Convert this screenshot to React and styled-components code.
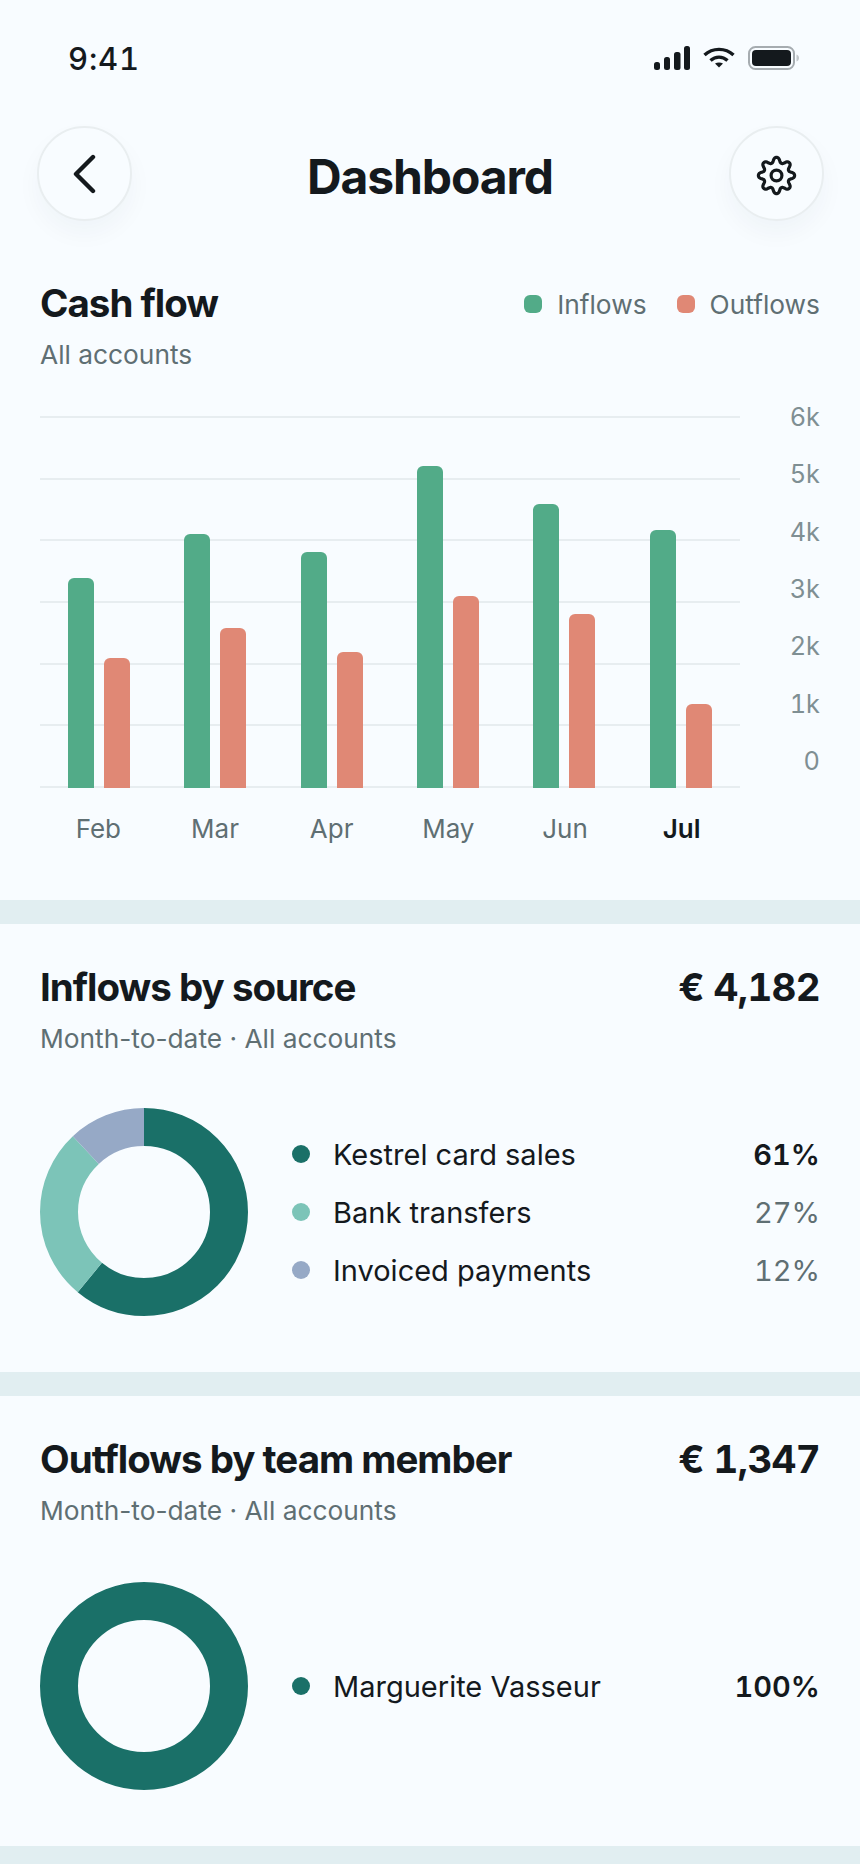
import styled, { createGlobalStyle } from 'styled-components';

const months = [
  { name: 'Feb', inflow: 210, outflow: 130 },
  { name: 'Mar', inflow: 254, outflow: 160 },
  { name: 'Apr', inflow: 236, outflow: 136 },
  { name: 'May', inflow: 322, outflow: 192 },
  { name: 'Jun', inflow: 284, outflow: 174 },
  { name: 'Jul', inflow: 258, outflow: 84, current: true },
];
const axisLabels = ['6k', '5k', '4k', '3k', '2k', '1k', '0'];
const gridLines = [0, 1, 2, 3, 4, 5, 6];

const sources = [
  { label: 'Kestrel card sales', pct: 61, color: '#1a7068', strong: true },
  { label: 'Bank transfers', pct: 27, color: '#7cc4b8' },
  { label: 'Invoiced payments', pct: 12, color: '#96a9c6' },
];
const members = [{ label: 'Marguerite Vasseur', pct: 100, color: '#1a7068', strong: true }];

const GlobalStyle = createGlobalStyle`
  html, body {
    margin: 0;
    padding: 0;
    background: #f8fcff;
    font-family: Inter, "Liberation Sans", sans-serif;
    color: #14191d;
  }
`;

const Page = styled.main`
  width: 860px;
  height: 1864px;
  overflow: hidden;
  background: #f8fcff;
`;

const StatusBar = styled.div`
  height: 116px;
  padding: 0 61px 0 68px;
  box-sizing: border-box;
  display: flex;
  align-items: center;
  justify-content: space-between;
`;

const Clock = styled.span`
  font-size: 31px;
  font-weight: 500;
  letter-spacing: 0.8px;
  font-variant-numeric: tabular-nums;
`;

const StatusIcons = styled.div`
  display: flex;
  align-items: center;
  gap: 13px;
`;

const Header = styled.header`
  height: 95px;
  margin-top: 10px;
  padding: 0 36.5px;
  display: flex;
  align-items: center;
  justify-content: space-between;
`;

const RoundButton = styled.button`
  width: 95px;
  height: 95px;
  padding: 0;
  border-radius: 50%;
  border: 2px solid #e9eef0;
  background: #f8fcff;
  color: #14191d;
  display: flex;
  align-items: center;
  justify-content: center;
  box-shadow: 0 12px 24px rgba(30, 60, 70, 0.04);
`;

const PageTitle = styled.h1`
  margin: 5px 0 0;
  font-size: 48px;
  font-weight: 700;
  letter-spacing: -1.1px;
`;

const Section = styled.section`
  padding: ${(p) => p.$top}px 40px ${(p) => p.$bottom}px;
`;

const HeadRow = styled.div`
  display: flex;
  align-items: center;
  justify-content: space-between;
`;

const SectionTitle = styled.h2`
  margin: 0;
  font-size: 38.5px;
  line-height: 46px;
  font-weight: 700;
  letter-spacing: -1px;
`;

const Sub = styled.p`
  margin: 14px 0 0;
  font-size: 26.3px;
  line-height: 30px;
  color: #5f6f73;
`;

const Amount = styled.span`
  font-size: 38.5px;
  font-weight: 700;
  letter-spacing: -0.7px;
  font-variant-numeric: tabular-nums;
`;

const Legend = styled.div`
  display: flex;
  gap: 30px;
  padding-top: 2px;
`;

const LegendItem = styled.span`
  display: flex;
  align-items: center;
  gap: 15px;
  font-size: 26.3px;
  color: #5f6f73;
`;

const Swatch = styled.i`
  width: 18px;
  height: 18px;
  border-radius: 6px;
  background: ${(p) => p.$color};
`;

const Chart = styled.div`
  margin-top: 44px;
  display: flex;
  justify-content: space-between;
  align-items: flex-start;
`;

const PlotColumn = styled.div`
  width: 700px;
  padding-top: 2px;
`;

const Plot = styled.div`
  position: relative;
  height: 372px;
  padding: 0 1px;
  display: grid;
  grid-template-columns: repeat(6, 1fr);
`;

const GridLayer = styled.div`
  position: absolute;
  inset: 0;
  display: flex;
  flex-direction: column;
  justify-content: space-between;
`;

const GridLine = styled.div`
  height: 2px;
  background: #e7edf0;
`;

const BarGroup = styled.div`
  position: relative;
  display: flex;
  align-items: flex-end;
  justify-content: center;
  gap: 10px;
`;

const Bar = styled.div`
  width: 26px;
  height: ${(p) => p.$height}px;
  border-radius: 6px 6px 0 0;
  background: ${(p) => p.$color};
`;

const Months = styled.div`
  display: grid;
  grid-template-columns: repeat(6, 1fr);
  margin-top: 26px;
`;

const Month = styled.span`
  text-align: center;
  font-size: 26px;
  line-height: 30px;
  color: ${(p) => (p.$current ? '#14191d' : '#5f6f73')};
  font-weight: ${(p) => (p.$current ? 600 : 400)};
`;

const Axis = styled.div`
  height: 372px;
  margin-top: -11px;
  display: flex;
  flex-direction: column;
  justify-content: space-between;
  align-items: flex-end;
`;

const AxisLabel = styled.span`
  font-size: 25.3px;
  line-height: 28px;
  color: #7f8f93;
  font-variant-numeric: tabular-nums;
`;

const Divider = styled.div`
  height: 24px;
  background: #e1eef1;
`;

const BreakdownRow = styled.div`
  margin-top: ${(p) => p.$top}px;
  display: flex;
  align-items: center;
`;

const BreakdownList = styled.ul`
  list-style: none;
  margin: 0 0 0 44px;
  padding: 0;
  flex: 1;
  display: flex;
  flex-direction: column;
  gap: 24px;
`;

const BreakdownItem = styled.li`
  display: flex;
  align-items: center;
  height: 34px;
`;

const Dot = styled.i`
  width: 18px;
  height: 18px;
  border-radius: 50%;
  background: ${(p) => p.$color};
  margin-right: 23px;
`;

const ItemLabel = styled.span`
  flex: 1;
  font-size: 29px;
  color: #14191d;
`;

const ItemPct = styled.span`
  font-size: 29px;
  color: ${(p) => (p.$strong ? '#14191d' : '#5f6f73')};
  font-weight: ${(p) => (p.$strong ? 600 : 400)};
  font-variant-numeric: tabular-nums;
`;

function SignalIcon() {
  return (
    <svg width="36" height="24" viewBox="0 0 36 24" fill="#14191d">
      <rect x="0" y="16" width="6" height="8" rx="2.5" />
      <rect x="10" y="11" width="6" height="13" rx="2.5" />
      <rect x="20" y="6" width="6.5" height="18" rx="2.5" />
      <rect x="30" y="0" width="6" height="24" rx="2.5" />
    </svg>
  );
}

function WifiIcon() {
  return (
    <svg width="32" height="22" viewBox="0 0 32 22" fill="none" stroke="#14191d" strokeWidth="3.4">
      <path d="M1.5 8 C9.5 0.5 22.5 0.5 30.5 8" />
      <path d="M7.5 13.5 C12.5 9 19.5 9 24.5 13.5" />
      <path d="M12 16.6 L16 20.6 L20 16.6 C17.5 15 14.5 15 12 16.6 Z" fill="#14191d" stroke="none" />
    </svg>
  );
}

function BatteryIcon() {
  return (
    <svg width="51" height="24" viewBox="0 0 51 24">
      <rect x="1" y="1" width="45" height="22" rx="6.5" fill="none" stroke="#a6acb0" strokeWidth="2" />
      <rect x="4" y="4" width="39" height="16" rx="4" fill="#14191d" />
      <path d="M48.5 8.5 C50 9 51 10.4 51 12 C51 13.6 50 15 48.5 15.5 Z" fill="#c2c7ca" />
    </svg>
  );
}

function BackIcon() {
  return (
    <svg width="25" height="40" viewBox="0 0 25 40" fill="none" stroke="#14191d" strokeWidth="4.4" strokeLinecap="round" strokeLinejoin="round">
      <path d="M21 3 L4 20 L21 37" />
    </svg>
  );
}

// eight rounded teeth, sampled around the centre
const gearPath = (() => {
  const points = [];
  for (let i = 0; i < 240; i++) {
    const angle = (i / 240) * Math.PI * 2;
    const wave = Math.tanh(1.1 * Math.cos(8 * angle)) / Math.tanh(1.1);
    const radius = 15.6 + 2.5 * wave;
    points.push(`${(22.5 + radius * Math.sin(angle)).toFixed(2)} ${(23.5 - radius * Math.cos(angle)).toFixed(2)}`);
  }
  return `M${points.join(' L')} Z`;
})();

function GearIcon() {
  return (
    <svg width="44" height="44" viewBox="0 0 44 44" fill="none" stroke="#14191d" strokeWidth="3.2" strokeLinejoin="round">
      <path d={gearPath} />
      <circle cx="22.5" cy="23.5" r="5.4" />
    </svg>
  );
}

function Donut({ items }) {
  let start = 0;
  return (
    <svg width="208" height="208" viewBox="0 0 208 208" style={{ flexShrink: 0 }}>
      <g transform="rotate(-90 104 104)" fill="none" strokeWidth="38">
        {items.map((item) => {
          const offset = -start;
          start += item.pct;
          return (
            <circle
              key={item.label}
              cx="104"
              cy="104"
              r="85"
              pathLength="100"
              stroke={item.color}
              strokeDasharray={`${item.pct} ${100 - item.pct}`}
              strokeDashoffset={offset}
            />
          );
        })}
      </g>
    </svg>
  );
}

function Breakdown({ title, amount, items, top }) {
  return (
    <>
      <HeadRow>
        <SectionTitle>{title}</SectionTitle>
        <Amount>{amount}</Amount>
      </HeadRow>
      <Sub>Month-to-date · All accounts</Sub>
      <BreakdownRow $top={top}>
        <Donut items={items} />
        <BreakdownList>
          {items.map((item) => (
            <BreakdownItem key={item.label}>
              <Dot $color={item.color} />
              <ItemLabel>{item.label}</ItemLabel>
              <ItemPct $strong={item.strong}>{item.pct}%</ItemPct>
            </BreakdownItem>
          ))}
        </BreakdownList>
      </BreakdownRow>
    </>
  );
}

function App() {
  return (
    <Page>
      <GlobalStyle />
      <StatusBar>
        <Clock>9:41</Clock>
        <StatusIcons>
          <SignalIcon />
          <WifiIcon />
          <BatteryIcon />
        </StatusIcons>
      </StatusBar>
      <Header>
        <RoundButton>
          <BackIcon />
        </RoundButton>
        <PageTitle>Dashboard</PageTitle>
        <RoundButton>
          <GearIcon />
        </RoundButton>
      </Header>

      <Section $top={59} $bottom={56}>
        <HeadRow>
          <SectionTitle>Cash flow</SectionTitle>
          <Legend>
            <LegendItem>
              <Swatch $color="#52ab88" />
              Inflows
            </LegendItem>
            <LegendItem>
              <Swatch $color="#e08875" />
              Outflows
            </LegendItem>
          </Legend>
        </HeadRow>
        <Sub>All accounts</Sub>
        <Chart>
          <PlotColumn>
            <Plot>
              <GridLayer>
                {gridLines.map((line) => (
                  <GridLine key={line} />
                ))}
              </GridLayer>
              {months.map((month) => (
                <BarGroup key={month.name}>
                  <Bar $height={month.inflow} $color="#52ab88" />
                  <Bar $height={month.outflow} $color="#e08875" />
                </BarGroup>
              ))}
            </Plot>
            <Months>
              {months.map((month) => (
                <Month key={month.name} $current={month.current}>
                  {month.name}
                </Month>
              ))}
            </Months>
          </PlotColumn>
          <Axis>
            {axisLabels.map((label) => (
              <AxisLabel key={label}>{label}</AxisLabel>
            ))}
          </Axis>
        </Chart>
      </Section>
      <Divider />

      <Section $top={40} $bottom={56}>
        <Breakdown title="Inflows by source" amount="€ 4,182" items={sources} top={54} />
      </Section>
      <Divider />

      <Section $top={40} $bottom={56}>
        <Breakdown title="Outflows by team member" amount="€ 1,347" items={members} top={56} />
      </Section>
      <Divider />
    </Page>
  );
}

export default App;
